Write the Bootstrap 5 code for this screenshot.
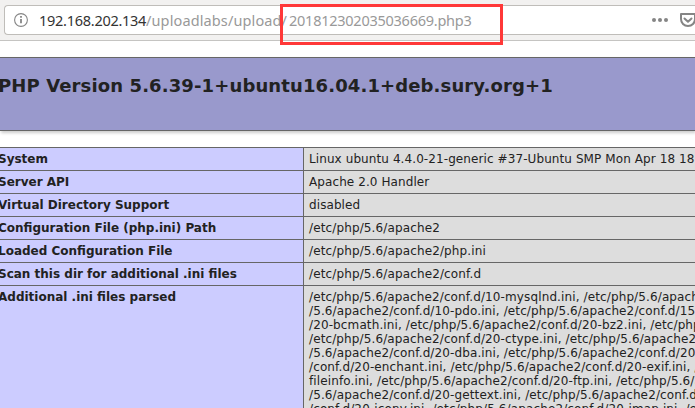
<!DOCTYPE html>
<html lang="en">
<head>
<meta charset="utf-8">
<title>phpinfo()</title>
<link href="https://cdn.jsdelivr.net/npm/bootstrap@5.3.0/dist/css/bootstrap.min.css" rel="stylesheet">
<style>
body{font-family:"DejaVu Sans",sans-serif;font-size:12px;line-height:14px;color:#222;background:#fff;height:408px}
.toolbar{height:41px;background:#f2f1f0;border-bottom:1px solid #c5c4c2;padding:5px 0 0 4px}
.urlbar{height:30px;border:1px solid #bfbdb9;border-right:0;border-radius:4px 0 0 4px;background:#fff;padding-left:9px}
.addr{font-family:"Noto Sans",sans-serif;font-size:14.5px;line-height:28px;color:#999;margin-left:11px;width:433px}
.addr span{display:inline-block;white-space:nowrap}
.host{color:#333;width:107px;letter-spacing:-.27px}
.path{width:143px;letter-spacing:.12px}
.file{letter-spacing:-.25px}
.more{margin-left:179px;margin-right:9px}
.marker{position:absolute;left:280px;top:4px;width:223px;height:41px;border:3px solid #ff3838}
.banner{margin-top:16px;height:74px;background:#99c;border:solid #666;border-width:1px 0;box-shadow:1px 2px 3px #ccc;padding-top:17px}
.banner h1{font-size:18px;line-height:21px;font-weight:bold;margin:0 0 0 -2px;letter-spacing:.12px}
.info{margin-top:16px}
.info-row{border-top:1px solid #666}
.info-key{width:304px;background:#ccf;border-right:1px solid #666;font-weight:bold;padding:4px 0;text-indent:-2px}
.info-val{background:#ddd;padding:4px 0 4px 5px;white-space:nowrap;letter-spacing:.09px;min-width:0;overflow:hidden}
.fs-path{letter-spacing:.13px}
.fs-list{letter-spacing:.12px}
</style>
<script src="https://cdn.jsdelivr.net/npm/bootstrap@5.3.0/dist/js/bootstrap.bundle.min.js"></script>
</head>
<body class="overflow-hidden position-relative">
<header class="toolbar">
  <div class="urlbar d-flex align-items-center overflow-hidden">
    <svg class="flex-shrink-0" width="14" height="14" viewBox="0 0 14 14" fill="none" stroke="#858585"><circle cx="7" cy="7" r="6.4" stroke-width="1.1"/><path d="M7 6v4.2" stroke-width="1.8"/><path d="M7 3v1.8" stroke-width="1.8"/></svg>
    <div class="addr flex-shrink-0 d-flex"><span class="host">192.168.202.134</span><span class="path">/uploadlabs/upload/</span><span class="file">201812302035036669.php3</span></div>
    <svg class="flex-shrink-0 more" width="18" height="6" viewBox="0 0 18 6" fill="#858585"><circle cx="3" cy="3" r="2"/><circle cx="9" cy="3" r="2"/><circle cx="15" cy="3" r="2"/></svg>
    <svg class="flex-shrink-0" width="20" height="16" viewBox="0 0 20 16" fill="none" stroke="#858585" stroke-width="2" stroke-linejoin="round" stroke-linecap="round"><path d="M3 2h14v5c0 4-3 7-7 7s-7-3-7-7z"/><path d="M6.5 6.5 10 9.8l3.500-3.300"/></svg>
  </div>
</header>
<div class="marker"></div>
<main>
  <div class="banner"><h1 class="text-nowrap">PHP Version 5.6.39-1+ubuntu16.04.1+deb.sury.org+1</h1></div>
  <div class="info">
    <div class="info-row d-flex"><div class="info-key flex-shrink-0">System</div><div class="info-val flex-grow-1">Linux ubuntu 4.4.0-21-generic #37-Ubuntu SMP Mon Apr 18 18</div></div>
    <div class="info-row d-flex"><div class="info-key flex-shrink-0">Server API</div><div class="info-val flex-grow-1">Apache 2.0 Handler</div></div>
    <div class="info-row d-flex"><div class="info-key flex-shrink-0">Virtual Directory Support</div><div class="info-val flex-grow-1">disabled</div></div>
    <div class="info-row d-flex"><div class="info-key flex-shrink-0">Configuration File (php.ini) Path</div><div class="info-val fs-path flex-grow-1">/etc/php/5.6/apache2</div></div>
    <div class="info-row d-flex"><div class="info-key flex-shrink-0">Loaded Configuration File</div><div class="info-val fs-path flex-grow-1">/etc/php/5.6/apache2/php.ini</div></div>
    <div class="info-row d-flex"><div class="info-key flex-shrink-0">Scan this dir for additional .ini files</div><div class="info-val fs-path flex-grow-1">/etc/php/5.6/apache2/conf.d</div></div>
    <div class="info-row d-flex"><div class="info-key flex-shrink-0">Additional .ini files parsed</div><div class="info-val fs-list flex-grow-1">/etc/php/5.6/apache2/conf.d/10-mysqlnd.ini, /etc/php/5.6/apach<br>/5.6/apache2/conf.d/10-pdo.ini, /etc/php/5.6/apache2/conf.d/15<br>/20-bcmath.ini, /etc/php/5.6/apache2/conf.d/20-bz2.ini, /etc/php<br>/etc/php/5.6/apache2/conf.d/20-ctype.ini, /etc/php/5.6/apache2<br>/5.6/apache2/conf.d/20-dba.ini, /etc/php/5.6/apache2/conf.d/20<br>/conf.d/20-enchant.ini, /etc/php/5.6/apache2/conf.d/20-exif.ini, /<br>fileinfo.ini, /etc/php/5.6/apache2/conf.d/20-ftp.ini, /etc/php/5.6/a<br>/5.6/apache2/conf.d/20-gettext.ini, /etc/php/5.6/apache2/conf.d<br>/conf.d/20-iconv.ini, /etc/php/5.6/apache2/conf.d/20-imap.ini, /etc</div></div>
  </div>
</main>
</body>
</html>
